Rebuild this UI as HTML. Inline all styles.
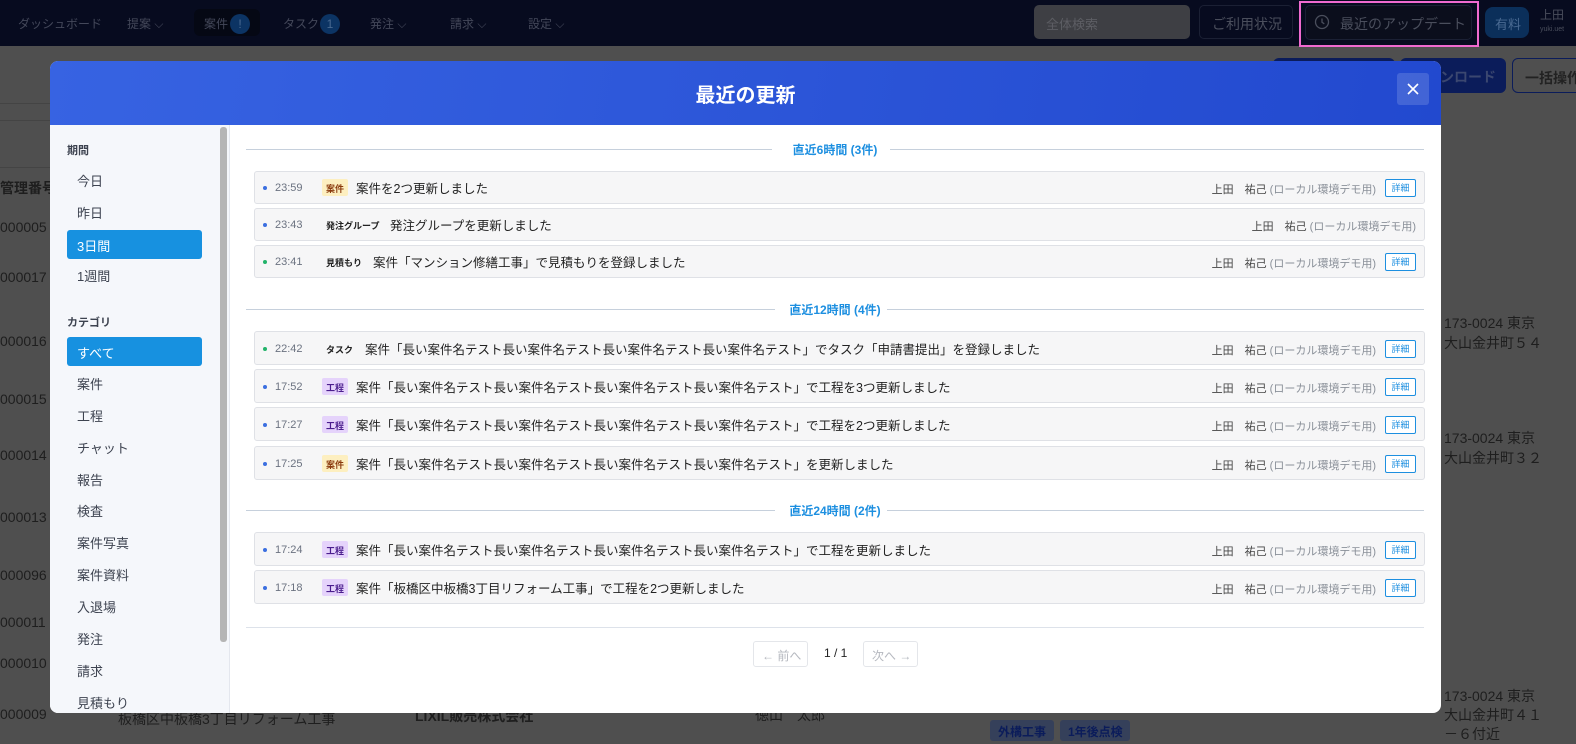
<!DOCTYPE html>
<html><head><meta charset="utf-8"><style>
*{box-sizing:border-box;margin:0;padding:0}
body{width:1576px;height:741px;overflow:hidden;background:#4f4f4f;font-family:"Liberation Sans","Noto Sans CJK JP",sans-serif;position:relative;color:#222}
.a{position:absolute;white-space:nowrap}
.nav{left:0;top:0;width:1576px;height:46px;background:#070b1f}
.nv{color:#44485a;font-size:12px;top:15px}
.bg{color:#1e1e1e;font-size:14px}
.hl{left:0;width:50px;height:1px;background:#444}
.modal{left:50px;top:61px;width:1391px;height:652px;background:#fff;border-radius:8px;overflow:hidden}
.head{left:0;top:0;width:1391px;height:64px;background:linear-gradient(100deg,#3763e2,#2249cf)}
.side{left:0;top:64px;width:180px;height:588px;background:#f5f7fb;border-right:1px solid #e4e7ee}
.si{left:17px;width:135px;height:29px;font-size:13px;color:#3d4350;padding:6px 0 0 10px}
.si.on{background:#1791e0;color:#fff;border-radius:3px}
.sh{left:17px;font-size:11px;font-weight:bold;color:#3d4350}
.sec{font-size:12px;color:#1d8fe0;font-weight:bold;left:196px;width:1178px;text-align:center}
.ln{left:196px;width:1178px;height:1px;background:#c6d0dc}
.row{left:204px;width:1171px;background:#f6f6f7;border:1px solid #dfe1e6;border-radius:3px}
.row .d{position:absolute;left:8px;width:4px;height:4px;border-radius:2px;background:#3b6fe0}
.row .t{position:absolute;left:20px;font-size:11px;color:#6b7280}
.tag{position:absolute;left:67px;height:17px;font-size:9px;padding:3px 4px;border-radius:2px;font-weight:bold}
.ty{background:#fdefc0;color:#8a3a0d}
.tp{background:#e5d3fb;color:#4b1e8e}
.tn{color:#222;padding-left:4px}
.row .m{position:absolute;font-size:12.5px;color:#222}
.row .u{position:absolute;right:48px;font-size:11px;color:#444}
.row .u span{color:#8a9099}
.det{position:absolute;right:8px;width:31px;height:18px;border:1px solid #1d8fe0;border-radius:2px;font-size:9px;color:#1d8fe0;text-align:center;line-height:16px;background:#fff}
</style></head><body>
<div class="a nav"></div>
<div class="a nv" style="left:18px">ダッシュボード</div>
<div class="a nv" style="left:127px">提案 ⌵</div>
<div class="a" style="left:194px;top:9px;width:66px;height:27px;background:#050814;border-radius:6px"></div>
<div class="a nv" style="left:204px">案件</div>
<div class="a" style="left:230px;top:14px;width:20px;height:20px;border-radius:10px;background:#0c3464;color:#4a6a92;font-size:12px;text-align:center;line-height:20px">!</div>
<div class="a nv" style="left:283px">タスク</div>
<div class="a" style="left:320px;top:14px;width:20px;height:20px;border-radius:10px;background:#0c3464;color:#4a6a92;font-size:12px;text-align:center;line-height:20px">1</div>
<div class="a nv" style="left:370px">発注 ⌵</div>
<div class="a nv" style="left:450px">請求 ⌵</div>
<div class="a nv" style="left:528px">設定 ⌵</div>
<div class="a" style="left:1034px;top:5px;width:156px;height:34px;background:#3e3f44;border-radius:5px;color:#5d5e64;font-size:13px;padding:9px 12px">全体検索</div>
<div class="a" style="left:1199px;top:5px;width:94px;height:34px;border:1px solid #1b2034;border-radius:5px;color:#4a4e5c;font-size:14px;padding:8px 12px">ご利用状況</div>
<div class="a" style="left:1299px;top:1px;width:180px;height:46px;border:2px solid #f06ad0"></div>
<div class="a" style="left:1305px;top:5px;width:167px;height:35px;border:1px solid #1b2034;border-radius:5px;background:#0b0e1c;color:#4a4e5c;font-size:14px;padding:8px 0 0 34px">最近のアップデート</div>
<svg class="a" style="left:1314px;top:14px" width="16" height="16"><circle cx="8" cy="8" r="6.5" fill="none" stroke="#4a4e5c" stroke-width="1.3"/><path d="M8 4.5V8.3L10.3 9.8" fill="none" stroke="#4a4e5c" stroke-width="1.3"/></svg>
<div class="a" style="left:1485px;top:7px;width:44px;height:31px;border-radius:8px;background:#0b2f5a;color:#4a6a92;font-size:13px;padding:7px 0 0 10px">有料</div>
<div class="a" style="left:1540px;top:6px;color:#4a4e5c;font-size:12px">上田</div>
<div class="a" style="left:1540px;top:26px;color:#4a4e5c;font-size:7px">yuki.uet</div>
<div class="a" style="left:1273px;top:58px;width:122px;height:35px;background:#0b1c5a;border-radius:6px"></div>
<div class="a" style="left:1400px;top:58px;width:106px;height:35px;background:#0b1c5a;border-radius:6px;color:#3b4770;font-size:14px;padding:9px 0 0 40px;font-weight:bold">ンロード</div>
<div class="a" style="left:1512px;top:58px;width:70px;height:35px;border:1px solid #0b1c5a;border-radius:6px;color:#222;font-size:14px;padding:9px 0 0 12px;font-weight:bold">一括操作</div>
<div class="a hl" style="top:103px"></div><div class="a hl" style="top:120px"></div>
<div class="a hl" style="top:167px"></div>
<div class="a bg" style="left:0;top:178px;font-weight:bold">管理番号</div>
<div class="a bg" style="left:0;top:219px">000005</div>
<div class="a bg" style="left:0;top:269px">000017</div>
<div class="a bg" style="left:0;top:333px">000016</div>
<div class="a bg" style="left:0;top:391px">000015</div>
<div class="a bg" style="left:0;top:447px">000014</div>
<div class="a bg" style="left:0;top:509px">000013</div>
<div class="a bg" style="left:0;top:567px">000096</div>
<div class="a bg" style="left:0;top:614px">000011</div>
<div class="a bg" style="left:0;top:655px">000010</div>
<div class="a bg" style="left:0;top:706px">000009</div>
<div class="a bg" style="left:118px;top:709px">板橋区中板橋3丁目リフォーム工事</div>
<div class="a bg" style="left:415px;top:706px;font-weight:bold">LIXIL販売株式会社</div>
<div class="a bg" style="left:755px;top:705px">徳山　太郎</div>
<div class="a" style="left:990px;top:720px;width:64px;height:21px;background:#35405a;color:#0b1c5a;font-size:12px;font-weight:bold;padding:3px 8px;border-radius:3px">外構工事</div>
<div class="a" style="left:1060px;top:720px;width:70px;height:21px;background:#35405a;color:#0b1c5a;font-size:12px;font-weight:bold;padding:3px 8px;border-radius:3px">1年後点検</div>
<div class="a bg" style="left:1444px;top:313px;line-height:20px">173-0024 東京<br>大山金井町５４</div>
<div class="a bg" style="left:1444px;top:428px;line-height:20px">173-0024 東京<br>大山金井町３２</div>
<div class="a bg" style="left:1444px;top:687px;line-height:19px">173-0024 東京<br>大山金井町４１<br>－６付近</div>

<div class="a modal">
 <div class="a head"></div>
 <div class="a" style="left:0;top:18px;width:1391px;text-align:center;color:#fff;font-size:20px;font-weight:bold">最近の更新</div>
 <div class="a" style="left:1347px;top:12px;width:32px;height:32px;background:rgba(255,255,255,.15);border-radius:3px"></div>
 <svg class="a" style="left:1355px;top:20px" width="16" height="16"><path d="M3 3L13 13M13 3L3 13" stroke="#fff" stroke-width="1.6"/></svg>
 <div class="a side"></div>
 <div class="a" style="left:170px;top:66px;width:7px;height:515px;background:#b5b5b5;border-radius:3px"></div>
 <div class="a sh" style="top:81px">期間</div>
 <div class="a si" style="top:104px">今日</div>
 <div class="a si" style="top:136px">昨日</div>
 <div class="a si on" style="top:169px">3日間</div>
 <div class="a si" style="top:199px">1週間</div>
 <div class="a sh" style="top:253px">カテゴリ</div>
 <div class="a si on" style="top:276px">すべて</div>
 <div class="a si" style="top:307px">案件</div>
 <div class="a si" style="top:339px">工程</div>
 <div class="a si" style="top:371px">チャット</div>
 <div class="a si" style="top:403px">報告</div>
 <div class="a si" style="top:434px">検査</div>
 <div class="a si" style="top:466px">案件写真</div>
 <div class="a si" style="top:498px">案件資料</div>
 <div class="a si" style="top:530px">入退場</div>
 <div class="a si" style="top:562px">発注</div>
 <div class="a si" style="top:594px">請求</div>
 <div class="a si" style="top:626px">見積もり</div>

 <div class="a ln" style="top:88px"></div>
 <div class="a" style="left:722px;top:80px;width:118px;height:16px;background:#fff"></div>
 <div class="a sec" style="top:80px">直近6時間 (3件)</div>
 <div class="a row" style="top:110px;height:33px"><div class="d" style="top:14px"></div><div class="t" style="top:10px">23:59</div><div class="tag ty" style="top:7px">案件</div><div class="m" style="left:101px;top:6px">案件を2つ更新しました</div><div class="u" style="top:9px">上田　祐己 <span>(ローカル環境デモ用)</span></div><div class="det" style="top:7px">詳細</div></div>
 <div class="a row" style="top:147px;height:33px"><div class="d" style="top:14px"></div><div class="t" style="top:10px">23:43</div><div class="tag tn" style="top:7px">発注グループ</div><div class="m" style="left:135px;top:6px">発注グループを更新しました</div><div class="u" style="top:9px;right:8px">上田　祐己 <span>(ローカル環境デモ用)</span></div></div>
 <div class="a row" style="top:184px;height:33px"><div class="d" style="top:14px;background:#22b36a"></div><div class="t" style="top:10px">23:41</div><div class="tag tn" style="top:7px">見積もり</div><div class="m" style="left:118px;top:6px">案件「マンション修繕工事」で見積もりを登録しました</div><div class="u" style="top:9px">上田　祐己 <span>(ローカル環境デモ用)</span></div><div class="det" style="top:7px">詳細</div></div>

 <div class="a ln" style="top:248px"></div>
 <div class="a" style="left:725px;top:240px;width:112px;height:16px;background:#fff"></div>
 <div class="a sec" style="top:240px">直近12時間 (4件)</div>
 <div class="a row" style="top:270px;height:34px"><div class="d" style="top:15px;background:#22b36a"></div><div class="t" style="top:11px">22:42</div><div class="tag tn" style="top:8px">タスク</div><div class="m" style="left:110px;top:7px">案件「長い案件名テスト長い案件名テスト長い案件名テスト長い案件名テスト」でタスク「申請書提出」を登録しました</div><div class="u" style="top:10px">上田　祐己 <span>(ローカル環境デモ用)</span></div><div class="det" style="top:8px">詳細</div></div>
 <div class="a row" style="top:308px;height:34px"><div class="d" style="top:15px"></div><div class="t" style="top:11px">17:52</div><div class="tag tp" style="top:8px">工程</div><div class="m" style="left:101px;top:7px">案件「長い案件名テスト長い案件名テスト長い案件名テスト長い案件名テスト」で工程を3つ更新しました</div><div class="u" style="top:10px">上田　祐己 <span>(ローカル環境デモ用)</span></div><div class="det" style="top:8px">詳細</div></div>
 <div class="a row" style="top:346px;height:34px"><div class="d" style="top:15px"></div><div class="t" style="top:11px">17:27</div><div class="tag tp" style="top:8px">工程</div><div class="m" style="left:101px;top:7px">案件「長い案件名テスト長い案件名テスト長い案件名テスト長い案件名テスト」で工程を2つ更新しました</div><div class="u" style="top:10px">上田　祐己 <span>(ローカル環境デモ用)</span></div><div class="det" style="top:8px">詳細</div></div>
 <div class="a row" style="top:385px;height:34px"><div class="d" style="top:15px"></div><div class="t" style="top:11px">17:25</div><div class="tag ty" style="top:8px">案件</div><div class="m" style="left:101px;top:7px">案件「長い案件名テスト長い案件名テスト長い案件名テスト長い案件名テスト」を更新しました</div><div class="u" style="top:10px">上田　祐己 <span>(ローカル環境デモ用)</span></div><div class="det" style="top:8px">詳細</div></div>

 <div class="a ln" style="top:449px"></div>
 <div class="a" style="left:725px;top:441px;width:112px;height:16px;background:#fff"></div>
 <div class="a sec" style="top:441px">直近24時間 (2件)</div>
 <div class="a row" style="top:471px;height:34px"><div class="d" style="top:15px"></div><div class="t" style="top:11px">17:24</div><div class="tag tp" style="top:8px">工程</div><div class="m" style="left:101px;top:7px">案件「長い案件名テスト長い案件名テスト長い案件名テスト長い案件名テスト」で工程を更新しました</div><div class="u" style="top:10px">上田　祐己 <span>(ローカル環境デモ用)</span></div><div class="det" style="top:8px">詳細</div></div>
 <div class="a row" style="top:509px;height:34px"><div class="d" style="top:15px"></div><div class="t" style="top:11px">17:18</div><div class="tag tp" style="top:8px">工程</div><div class="m" style="left:101px;top:7px">案件「板橋区中板橋3丁目リフォーム工事」で工程を2つ更新しました</div><div class="u" style="top:10px">上田　祐己 <span>(ローカル環境デモ用)</span></div><div class="det" style="top:8px">詳細</div></div>

 <div class="a" style="left:196px;top:566px;width:1178px;height:1px;background:#dde2ea"></div>
 <div class="a" style="left:703px;top:580px;width:55px;height:26px;border:1px solid #e4e6ea;border-radius:3px;font-size:12px;color:#b5b8bf;padding:5px 0 0 8px">← 前へ</div>
 <div class="a" style="left:774px;top:585px;font-size:12px;color:#222">1 / 1</div>
 <div class="a" style="left:813px;top:580px;width:55px;height:26px;border:1px solid #e4e6ea;border-radius:3px;font-size:12px;color:#b5b8bf;padding:5px 0 0 8px">次へ →</div>
</div>
</body></html>
